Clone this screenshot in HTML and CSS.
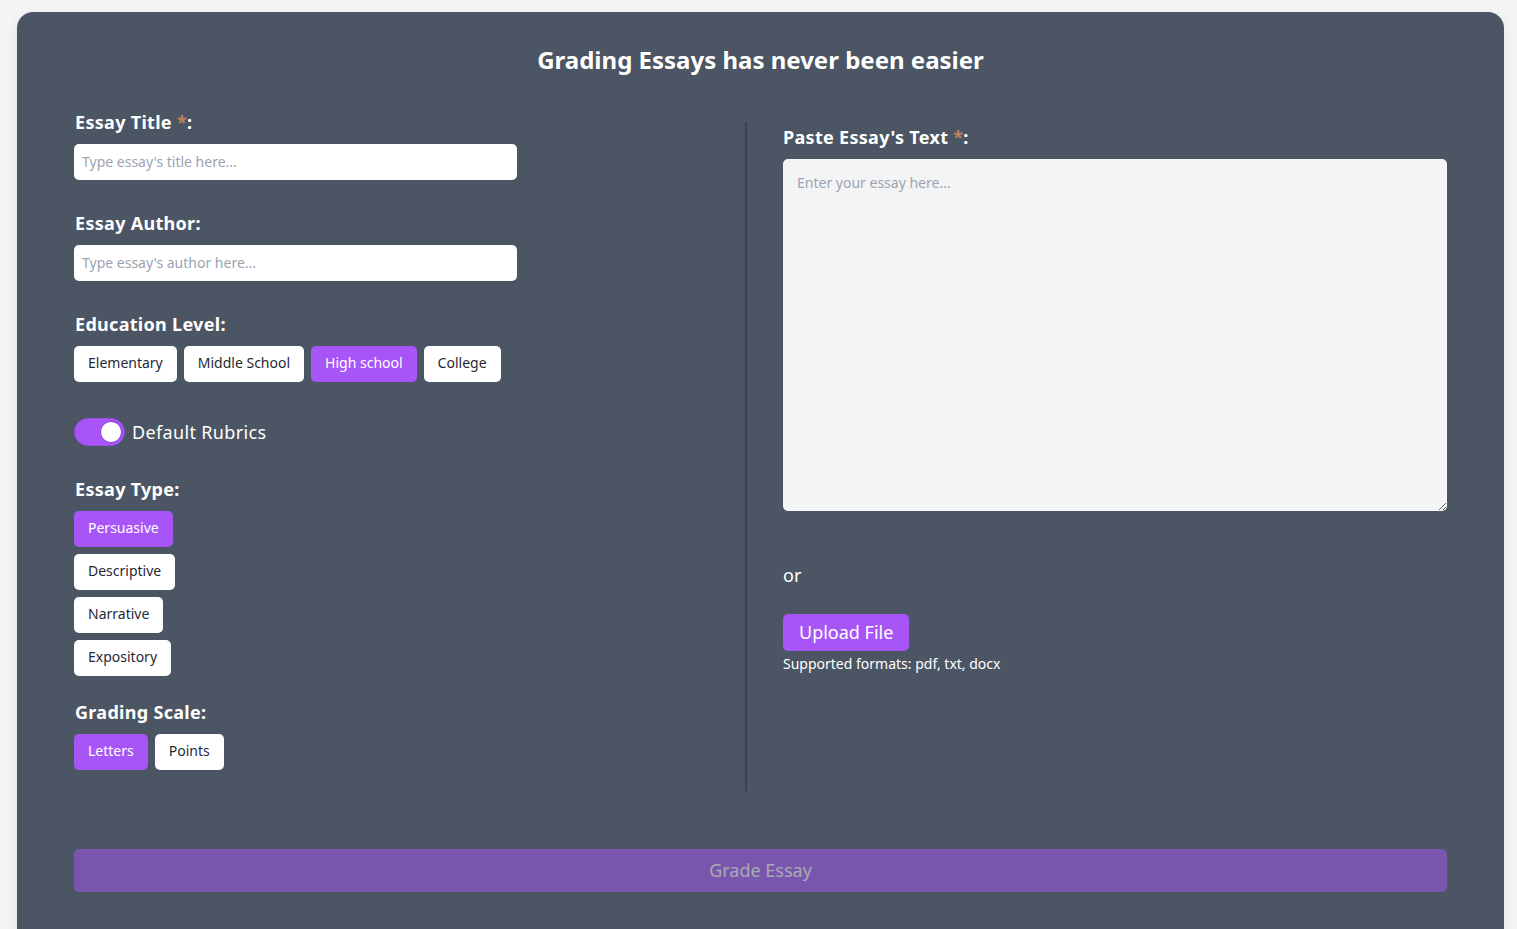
FILE: index.html
```html
<!DOCTYPE html>
<html lang="en">
<head>
  <meta charset="UTF-8">
  <meta name="viewport" content="width=device-width, initial-scale=1.0">
  <title>Essay Grader</title>
  <link rel="stylesheet" href="styles.css">
</head>
<body>
  <div class="card">
    <h1 class="title">Grading Essays has never been easier</h1>

    <div class="columns">
      <div class="left-col">
        <label class="label" for="essayTitle">Essay Title <span class="req">*</span>:</label>
        <input type="text" id="essayTitle" class="text-input" placeholder="Type essay's title here...">

        <label class="label label-gap" for="essayAuthor">Essay Author:</label>
        <input type="text" id="essayAuthor" class="text-input" placeholder="Type essay's author here...">

        <div class="label label-gap">Education Level:</div>
        <div class="btn-row">
          <button class="opt">Elementary</button>
          <button class="opt">Middle School</button>
          <button class="opt active">High school</button>
          <button class="opt">College</button>
        </div>

        <div class="toggle-row">
          <span class="toggle"><span class="knob"></span></span>
          <span class="toggle-label">Default Rubrics</span>
        </div>

        <div class="label">Essay Type:</div>
        <div class="btn-stack">
          <button class="opt active">Persuasive</button>
          <button class="opt">Descriptive</button>
          <button class="opt">Narrative</button>
          <button class="opt">Expository</button>
        </div>

        <div class="label label-scale">Grading Scale:</div>
        <div class="btn-row">
          <button class="opt active">Letters</button>
          <button class="opt">Points</button>
        </div>
      </div>

      <div class="divider"></div>

      <div class="right-col">
        <label class="label" for="essayText">Paste Essay's Text <span class="req">*</span>:</label>
        <textarea id="essayText" class="essay-text" placeholder="Enter your essay here..."></textarea>

        <div class="or">or</div>

        <button class="upload">Upload File</button>
        <div class="formats">Supported formats: pdf, txt, docx</div>
      </div>
    </div>

    <button class="grade" disabled>Grade Essay</button>
  </div>
</body>
</html>
```

FILE: styles.css
```css
body {
  margin: 0;
  padding: 12px 13px 0 17px;
  background-color: #f5f5f5;
  font-family: "Noto Sans", "Open Sans", sans-serif;
  color: #fff;
  overflow: hidden;
}

.card {
  background-color: #4b5563;
  border-radius: 16px;
  box-shadow: 0 4px 16px rgba(0, 0, 0, 0.08);
  padding: 32px 57px 60px 57px;
  min-height: 900px;
}

.title {
  margin: 0;
  text-align: center;
  font-size: 24px;
  line-height: 32px;
  font-weight: 700;
}

.columns {
  display: grid;
  grid-template-columns: 671px 2px 1fr;
  margin-top: 32px;
}

.left-col {
  display: flex;
  flex-direction: column;
  align-items: flex-start;
  padding-bottom: 21px;
}

.label {
  display: block;
  font-size: 18px;
  line-height: 28px;
  font-weight: 700;
  letter-spacing: 0.3px;
  margin-bottom: 8px;
  padding-left: 1px;
}

.label-gap {
  margin-top: 29px;
}

.label-scale {
  margin-top: 22px;
}

.req {
  color: #c2805f;
}

.text-input {
  width: 443px;
  height: 36px;
  box-sizing: border-box;
  border: none;
  border-radius: 5px;
  padding: 0 8px 2px;
  font-family: inherit;
  font-size: 14px;
  color: #1f2937;
  background: #fff;
}

.text-input::placeholder,
.essay-text::placeholder {
  color: #9ca3af;
}

.btn-row {
  display: flex;
  gap: 7px;
}

.btn-stack {
  display: flex;
  flex-direction: column;
  align-items: flex-start;
  gap: 7px;
}

.opt {
  height: 36px;
  padding: 0 14px 3px;
  border: none;
  border-radius: 5px;
  background: #fff;
  color: #1f2937;
  font-family: inherit;
  font-size: 14px;
  cursor: pointer;
}

.opt.active {
  background: #a855f7;
  color: #fff;
}

.toggle-row {
  display: flex;
  align-items: center;
  gap: 7px;
  margin: 36px 0 29px;
}

.toggle {
  position: relative;
  width: 51px;
  height: 28px;
  box-sizing: border-box;
  border-radius: 14px;
  background: #a855f7;
  border: 1px solid #9b4be6;
}

.knob {
  position: absolute;
  top: 2px;
  right: 2px;
  width: 22px;
  height: 22px;
  border-radius: 50%;
  background: #fff;
  border: 1px solid #8b3fd6;
  box-sizing: border-box;
}

.toggle-label {
  font-size: 18px;
  line-height: 28px;
  letter-spacing: 0.35px;
}

.divider {
  background: #374151;
  margin-top: 14px;
}

.right-col {
  padding-left: 36px;
  padding-top: 15px;
}

.right-col .label {
  padding-left: 0;
}

.essay-text {
  display: block;
  width: 100%;
  height: 352px;
  box-sizing: border-box;
  border: none;
  border-radius: 5px;
  background: #f3f4f6;
  padding: 12px 14px;
  font-family: inherit;
  font-size: 14px;
  line-height: 24px;
  color: #1f2937;
}

.or {
  margin-top: 50px;
  font-size: 18px;
  line-height: 28px;
}

.upload {
  display: block;
  margin-top: 25px;
  height: 37px;
  padding: 0 16px 2px;
  border: none;
  border-radius: 5px;
  background: #a855f7;
  color: #fff;
  font-family: inherit;
  font-size: 18px;
  cursor: pointer;
}

.formats {
  margin-top: 3px;
  font-size: 14px;
  line-height: 20px;
}

.grade {
  display: block;
  width: 100%;
  height: 43px;
  margin-top: 58px;
  padding-bottom: 2px;
  border: none;
  border-radius: 5px;
  background: #a855f7;
  color: #fff;
  opacity: 0.5;
  font-family: inherit;
  font-size: 18px;
}
```
